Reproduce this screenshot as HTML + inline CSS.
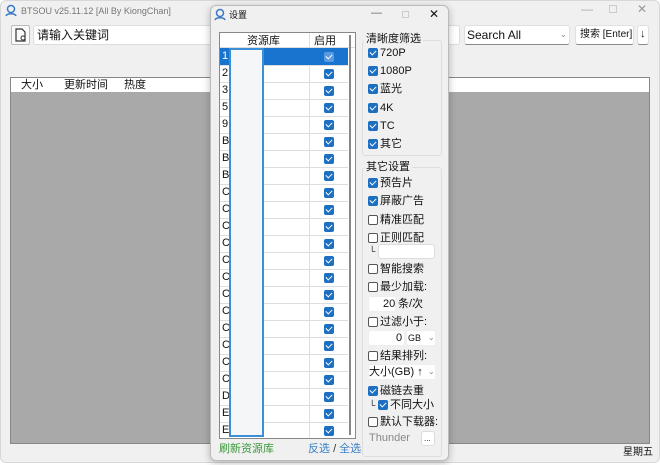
<!DOCTYPE html>
<html><head><meta charset="utf-8"><style>
*{box-sizing:border-box;margin:0;padding:0}
body{width:660px;height:465px;background:#fff;font-family:"Liberation Sans","Noto Sans CJK SC",sans-serif;font-size:11px;line-height:13px;color:#111;position:relative;overflow:hidden}
.a{position:absolute}
.win{left:0;top:0;width:660px;height:463px;background:#f0f0f0;border:1px solid #d8d8d8;border-radius:6px}
.cb{position:absolute;width:10px;height:10px;border-radius:2px;background:#1d6fc2}
.cb:after{content:"";position:absolute;left:3px;top:1px;width:3px;height:5px;border:solid #fff;border-width:0 1.5px 1.5px 0;transform:rotate(45deg)}
.ub{position:absolute;width:10px;height:10px;border-radius:2px;border:1px solid #555;background:#fff}
.lbl{position:absolute;font-size:11px;line-height:13px}
.inp{position:absolute;background:#fff;border:1px solid #e0e0e0;border-bottom:1px solid #888;border-radius:3px}
</style></head><body>
<div class="a win"></div>
<svg class="a" style="left:5px;top:4px" width="13" height="13" viewBox="0 0 13 13"><circle cx="6" cy="5" r="3.5" fill="none" stroke="#3a78c8" stroke-width="1.5"/><path d="M1 12c1-3 9-3 10 0" fill="none" stroke="#3a78c8" stroke-width="1.5"/></svg>
<div class="a" style="left:21px;top:5px;font-size:9px;color:#777">BTSOU v25.11.12 [All By KiongChan]</div>
<div class="a" style="left:581px;top:3px;color:#aaa;font-size:12px">—</div>
<div class="a" style="left:609px;top:5px;width:8px;height:8px;border:1px solid #ccc"></div>
<div class="a" style="left:637px;top:3px;color:#999;font-size:12px">✕</div>
<div class="a" style="left:11px;top:25px;width:19px;height:20px;border:1px solid #bbb;background:#fafafa;border-radius:2px"></div>
<svg class="a" style="left:14px;top:28px" width="13" height="14" viewBox="0 0 13 14"><path d="M2 1h6l3 3v9H2z" fill="none" stroke="#333" stroke-width="1.2"/><circle cx="9" cy="10" r="2" fill="#fff" stroke="#333"/></svg>
<div class="inp" style="left:33px;top:25px;width:427px;height:20px;border-color:#ddd"></div>
<div class="a" style="left:37px;top:28px;font-size:12px;line-height:14px">请输入关键词</div>
<div class="inp" style="left:464px;top:25px;width:106px;height:20px"></div>
<div class="a" style="left:467px;top:28px;font-size:12px;line-height:14px">Search All</div>
<div class="a" style="left:560px;top:28px;font-size:8px;color:#888">⌄</div>
<div class="inp" style="left:575px;top:25px;width:59px;height:20px"></div>
<div class="a" style="left:580px;top:28px;font-size:10px;line-height:13px">搜索 [Enter]</div>
<div class="inp" style="left:637px;top:25px;width:12px;height:20px"></div>
<div class="a" style="left:640px;top:28px;font-size:11px">↓</div>
<div class="a" style="left:10px;top:77px;width:640px;height:367px;border:1px solid #888;background:#a9a9a9"></div>
<div class="a" style="left:11px;top:78px;width:638px;height:14px;background:#fff"></div>
<div class="a" style="left:21px;top:79px">大小</div>
<div class="a" style="left:64px;top:79px">更新时间</div>
<div class="a" style="left:124px;top:79px">热度</div>
<div class="a" style="left:623px;top:446px;font-size:10px">星期五</div>

<div class="a" style="left:210px;top:5px;width:239px;height:456px;background:#f0f0f0;border:1px solid #bbb;border-radius:6px;box-shadow:0 2px 8px rgba(0,0,0,.25)"></div>
<svg class="a" style="left:214px;top:8px" width="13" height="13" viewBox="0 0 13 13"><circle cx="6" cy="5" r="3.5" fill="none" stroke="#3a78c8" stroke-width="1.5"/><path d="M1 12c1-3 9-3 10 0" fill="none" stroke="#3a78c8" stroke-width="1.5"/></svg>
<div class="a" style="left:229px;top:9px;font-size:9px">设置</div>
<div class="a" style="left:371px;top:7px;color:#666">—</div>
<div class="a" style="left:402px;top:11px;width:7px;height:7px;border:1px solid #ccc"></div>
<div class="a" style="left:429px;top:8px;font-size:12px">✕</div>

<div class="a" style="left:219px;top:32px;width:137px;height:407px;border:1px solid #888;background:#fff;overflow:hidden">
<div class="a" style="left:0;top:0;width:135px;height:15px;border-bottom:1px solid #ddd"></div>
<div class="a" style="left:27px;top:2px">资源库</div>
<div class="a" style="left:94px;top:2px">启用</div>
<div class="a" style="left:89px;top:0;width:1px;height:407px;background:#ddd"></div>
<div class="a" style="left:0;top:15px;width:128px;height:17px;background:#1874cf"></div>
<div id="rows"></div>
<div class="a" style="left:9px;top:15px;width:35px;height:389px;border:2px solid #3b8fd8;background:#f4f6f8"></div>
<div class="a" style="left:129px;top:2px;width:2px;height:400px;background:#888"></div>
</div>

<div class="a" style="left:362px;top:40px;width:80px;height:116px;border:1px solid #ddd;border-radius:3px"></div>
<div class="a" style="left:364px;top:33px;background:#f0f0f0;padding:0 2px">清晰度筛选</div>
<div class="a" style="left:362px;top:167px;width:80px;height:290px;border:1px solid #ddd;border-radius:3px"></div>
<div class="a" style="left:364px;top:161px;background:#f0f0f0;padding:0 2px">其它设置</div>
<div id="right"></div>
<div class="inp" style="left:378px;top:244px;width:57px;height:15px;border-color:#ddd"></div>
<div class="a" style="left:369px;top:245px;font-size:9px">└</div>
<div class="inp" style="left:368px;top:296px;width:28px;height:16px;border-color:#eee"></div>
<div class="a" style="left:383px;top:298px">20</div><div class="a" style="left:398px;top:298px">条/次</div>
<div class="inp" style="left:368px;top:330px;width:37px;height:16px;border-color:#eee"></div>
<div class="a" style="left:396px;top:332px">0</div>
<div class="inp" style="left:406px;top:330px;width:30px;height:16px;border-color:#eee"></div>
<div class="a" style="left:408px;top:332px;font-size:9px">GB</div><div class="a" style="left:428px;top:331px;font-size:8px;color:#888">⌄</div>
<div class="inp" style="left:368px;top:364px;width:68px;height:16px;border-color:#eee"></div>
<div class="a" style="left:369px;top:366px">大小(GB) ↑</div><div class="a" style="left:428px;top:365px;font-size:8px;color:#888">⌄</div>
<div class="a" style="left:369px;top:399px;font-size:9px">└</div>
<div class="a" style="left:369px;top:432px;color:#888">Thunder</div>
<div class="inp" style="left:421px;top:431px;width:14px;height:15px;border-color:#ddd"></div>
<div class="a" style="left:424px;top:432px;font-size:8px">...</div>
<div class="a" style="left:219px;top:443px;color:#3a9a3a">刷新资源库</div>
<div class="a" style="left:308px;top:443px;color:#3a80c8">反选 <span style="color:#333">/</span> 全选</div>
<script>
var L="1 2 3 5 9 B B B C C C C C C C C C C C C D E E".split(" ");
var h="";for(var i=0;i<L.length;i++){var t=15+17*i;
h+='<div class="a" style="left:2px;top:'+(t+2)+'px;color:'+(i?'#111':'#fff')+'">'+L[i]+'</div>';
h+='<div class="a" style="left:0;top:'+(t+17)+'px;width:128px;height:1px;background:#ddd"></div>';
h+='<div class="cb" style="left:104px;top:'+(t+4)+'px;'+(i?'':'background:#5a9ae0')+'"></div>';}
document.getElementById('rows').innerHTML=h;
var R=[[53,'720P',1],[71,'1080P',1],[89,'蓝光',1],[108,'4K',1],[126,'TC',1],[144,'其它',1],[183,'预告片',1],[201,'屏蔽广告',1],[220,'精准匹配',0],[238,'正则匹配',0],[269,'智能搜索',0],[287,'最少加载:',0],[322,'过滤小于:',0],[356,'结果排列:',0],[391,'磁链去重',1],[422,'默认下载器:',0]];
h="";R.forEach(function(r){h+='<div class="'+(r[2]?'cb':'ub')+'" style="left:368px;top:'+(r[0]-5)+'px"></div><div class="lbl" style="left:380px;top:'+(r[0]-6)+'px">'+r[1]+'</div>';});
h+='<div class="cb" style="left:378px;top:400px"></div><div class="lbl" style="left:390px;top:399px">不同大小</div>';
document.getElementById('right').innerHTML=h;
</script>
</body></html>
